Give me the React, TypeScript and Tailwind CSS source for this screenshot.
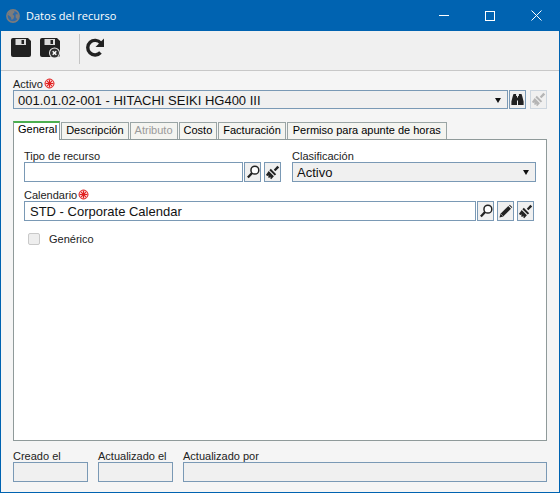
import React from "react";

const Floppy = ({ x = false }: { x?: boolean }) => (
  <svg width="21" height="21" viewBox="0 0 21 21">
    <path d="M2 0h15l3 3v14a2 2 0 0 1-2 2h-16a2 2 0 0 1-2-2v-15a2 2 0 0 1 2-2z" fill="#222" />
    <path d="M4.500 1h10.500v6h-10.500z" fill="#dcdcdc" />
    <path d="M10.500 2h2.500v4h-2.500z" fill="#222" />
    {x && (
      <>
        <circle cx="14.500" cy="15" r="5.500" fill="#f0f0f0" />
        <circle cx="14.500" cy="15" r="4.500" fill="#333" />
        <path d="M12.700 13.200l3.600 3.600M16.300 13.200l-3.600 3.600" stroke="#fff" strokeWidth="1.500" />
      </>
    )}
  </svg>
);

const Req = () => (
  <svg width="11" height="11" viewBox="0 0 11 11" className="mb-px shrink-0">
    <circle cx="5.500" cy="5.500" r="4.500" fill="#fdd8d8" stroke="#e02020" strokeWidth="1" />
    <path d="M5.500 1.500v8M1.500 5.500h8M2.700 2.700l5.600 5.600M8.300 2.700l-5.600 5.600" stroke="#e02020" strokeWidth="1.100" />
  </svg>
);

const Search = () => (
  <svg width="14" height="14" viewBox="0 0 15 15">
    <circle cx="9.500" cy="5.500" r="4.200" fill="#fff" stroke="#222" strokeWidth="1.600" />
    <path d="M6.500 8.500l-4.500 5" stroke="#222" strokeWidth="2.400" />
  </svg>
);

const Brush = ({ c = "#222" }: { c?: string }) => (
  <svg width="15" height="15" viewBox="0 0 15 15">
    <path d="M8.800 4.700l3.600-3.900 1.800 1.800-3.900 3.600z" fill={c} />
    <path d="M5.800 3.800l5.400 5.400-1.500 1.400-5.300-5.300z" fill={c} />
    <path d="M3.700 6.100l5.200 5.200-2.700 2.900-1-.9.500-1.600-1.700 1.300-1-.9 1.100-1.700-1.500.7-1.700-1.200z" fill={c} />
  </svg>
);

const Pencil = () => (
  <svg width="15" height="15" viewBox="0 0 15 15">
    <path d="M1.500 13.500l1-3.700 7.800-7.800 2.700 2.700-7.800 7.800z" fill="#222" />
    <path d="M3.200 10.200l1.600 1.600" stroke="#ccc" strokeWidth="0.700" />
    <path d="M11 1.300l.8-.6 2.500 2.500-.6.800z" fill="#222" />
  </svg>
);

const Binoculars = () => (
  <svg width="13" height="13" viewBox="0 0 13 13">
    <path d="M2.500 1h2.600v2h.9v9H.4v-3.500L1.800 3zM10.500 1H7.900v2H7v9h5.600V8.500L11.200 3z" fill="#222" />
    <path d="M6 4.500h1v3H6z" fill="#222" />
  </svg>
);

const IconBtn = ({ children }: { children: React.ReactNode }) => (
  <div className="flex h-5 w-[17px] shrink-0 items-center justify-center border border-[#7a99b5] bg-[#f0f0f0]">
    {children}
  </div>
);

const Arrow = () => (
  <svg width="6" height="5" viewBox="0 0 6 5" className="shrink-0">
    <path d="M0 0h6L3 5z" fill="#111" />
  </svg>
);

const Label = ({ children, req = false }: { children: React.ReactNode; req?: boolean }) => (
  <div className="flex h-[15px] items-end gap-px text-[11px] leading-[11px] text-[#222]">
    <span>{children}</span>
    {req && <Req />}
  </div>
);

const Tab = ({ children, dim = false, first = false, wide = false }: { children: React.ReactNode; dim?: boolean; first?: boolean; wide?: boolean }) =>
  first ? (
    <div className="z-10 -mb-px flex h-[19px] items-start border-x border-t-2 border-x-[#8f9a9a] border-t-[#4caf50] bg-white pl-1 pr-[2px] text-[11px] leading-[12px] text-black">
      {children}
    </div>
  ) : (
    <div className={`flex h-[17px] items-center border border-b-0 border-[#9aa5a5] bg-[#f4f4f0] pb-px text-[11px] ${wide ? "px-[5px]" : "px-1"} ${dim ? "text-[#9a9a9a]" : "text-black"}`}>
      {children}
    </div>
  );

const Box = () => <div className="h-5 border border-[#7a99b5] bg-[#f0f0f0]" />;

export default function App() {
  return (
    <div className="flex h-[493px] w-[560px] flex-col overflow-hidden border-x border-b border-[#0063b1] bg-[#f5f5f5] font-['Liberation_Sans',Arial,sans-serif]">
      <div className="flex h-[31px] shrink-0 items-center bg-[#0063b1] pl-[5px] font-['Open_Sans',sans-serif] text-white">
        <svg width="14" height="14" viewBox="0 0 16 16" className="shrink-0">
          <circle cx="8" cy="8" r="7" fill="#2f6aa8" stroke="#7c7c7c" strokeWidth="1.800" />
          <path d="M4 2.500l4.500-1 1.500 2-2.500 2.500 2 2-1 3-2 1.500-1-3.500-3.500-2.500zM11 6l3.500 0 .5 3-2 3-2-2.500z" fill="#7c7c7c" />
        </svg>
        <span className="ml-[6px] text-[11px] leading-none">Datos del recurso</span>
        <div className="ml-auto flex h-full items-center">
          <div className="flex h-full w-[46px] items-center justify-center">
            <div className="h-px w-[10px] bg-white" />
          </div>
          <div className="flex h-full w-[46px] items-center justify-center">
            <div className="h-[10px] w-[10px] border border-white" />
          </div>
          <div className="flex h-full w-[46px] items-center justify-center">
            <svg width="11" height="11" viewBox="0 0 11 11">
              <path d="M.5.5l10 10M10.500.5l-10 10" stroke="#fff" strokeWidth="1" />
            </svg>
          </div>
        </div>
      </div>

      <div className="flex h-10 shrink-0 items-center border-b border-[#c8c8c8] bg-[#f0f0f0] pb-[4px] pl-[10px]">
        <Floppy />
        <div className="ml-2">
          <Floppy x />
        </div>
        <div className="ml-[18px] h-[30px] w-px bg-[#c4c4c4]" />
        <svg width="21" height="21" viewBox="0 0 21 21" className="ml-[5px]">
          <path d="M15.500 14.500a7.300 7.300 0 1 1 .2-9.500" fill="none" stroke="#222" strokeWidth="3.400" />
          <path d="M19 .5v8.500h-8.500z" fill="#222" />
        </svg>
      </div>

      <div className="flex min-h-0 flex-1 flex-col px-3 pt-[4px]">
        <Label req>Activo</Label>
        <div className="flex">
          <div className="flex h-[19px] w-[495px] items-center border border-[#7a99b5] bg-[#f0f0f0] pl-1 pr-[6px] pt-px text-[13px] text-[#111]">
            <span className="flex-1 leading-none">001.01.02-001 - HITACHI SEIKI HG400 III</span>
            <Arrow />
          </div>
          <div className="ml-px flex h-[19px] w-[17px] items-center justify-center border border-[#7a99b5] bg-[#f0f0f0]">
            <Binoculars />
          </div>
          <div className="ml-1 flex h-[19px] w-[17px] items-center justify-center border border-[#cdd6df] bg-[#f0f0f0]">
            <Brush c="#b5b5b5" />
          </div>
        </div>

        <div className="mt-[12px] flex h-[18px] items-end gap-px">
          <Tab first>General</Tab>
          <Tab>Descripción</Tab>
          <Tab dim>Atributo</Tab>
          <Tab>Costo</Tab>
          <Tab>Facturación</Tab>
          <Tab wide>Permiso para apunte de horas</Tab>
        </div>

        <div className="h-[302px] w-[534px] border border-[#8f9a9a] bg-white px-[10px] pt-[7px]">
          <div className="flex">
            <div className="w-[268px]">
              <Label>Tipo de recurso</Label>
              <div className="flex">
                <div className="h-5 w-[219px] border border-[#7a99b5] bg-white" />
                <div className="ml-px">
                  <IconBtn><Search /></IconBtn>
                </div>
                <div className="ml-[3px]">
                  <IconBtn><Brush /></IconBtn>
                </div>
              </div>
            </div>
            <div className="w-[244px]">
              <Label>Clasificación</Label>
              <div className="flex h-5 items-center border border-[#7a99b5] bg-[#f0f0f0] pl-1 pr-[6px] text-[13px] text-[#111]">
                <span className="flex-1 leading-none">Activo</span>
                <Arrow />
              </div>
            </div>
          </div>

          <div className="mt-[4px]">
            <Label req>Calendario</Label>
            <div className="flex">
              <div className="flex h-5 w-[452px] items-center border border-[#7a99b5] bg-white pl-[5px] text-[13px] leading-none text-[#111]">
                STD - Corporate Calendar
              </div>
              <div className="ml-px">
                <IconBtn><Search /></IconBtn>
              </div>
              <div className="ml-[3px]">
                <IconBtn><Pencil /></IconBtn>
              </div>
              <div className="ml-[3px]">
                <IconBtn><Brush /></IconBtn>
              </div>
            </div>
          </div>

          <div className="mt-[10px] flex items-center pl-1">
            <div className="h-3 w-3 rounded-[2px] border border-[#c9c9c9] bg-[#eeeeee]" />
            <span className="ml-[9px] text-[11px] text-[#222]">Genérico</span>
          </div>
        </div>

        <div className="mt-[6px] flex gap-[10px]">
          <div className="w-[75px]">
            <Label>Creado el</Label>
            <Box />
          </div>
          <div className="w-[75px]">
            <Label>Actualizado el</Label>
            <Box />
          </div>
          <div className="w-[364px]">
            <Label>Actualizado por</Label>
            <Box />
          </div>
        </div>
      </div>
    </div>
  );
}
